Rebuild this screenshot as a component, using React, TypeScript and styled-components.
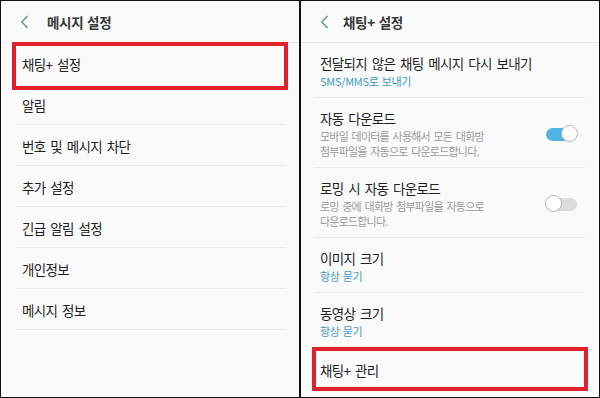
import styled, { createGlobalStyle } from "styled-components";

const GlobalStyle = createGlobalStyle`
  html, body {
    margin: 0;
    padding: 0;
    background: #fafafa;
  }
  body {
    font-family: "Noto Sans CJK KR", "Noto Sans", sans-serif;
    color: #1f1f1f;
  }
`;

interface SimpleItem {
  title: string;
  highlight?: boolean;
}

interface DetailItem {
  title: string;
  sub?: string;
  desc?: string[];
  toggle?: "on" | "off";
  highlight?: boolean;
}

const leftItems: SimpleItem[] = [
  { title: "채팅+ 설정", highlight: true },
  { title: "알림" },
  { title: "번호 및 메시지 차단" },
  { title: "추가 설정" },
  { title: "긴급 알림 설정" },
  { title: "개인정보" },
  { title: "메시지 정보" },
];

const rightItems: DetailItem[] = [
  { title: "전달되지 않은 채팅 메시지 다시 보내기", sub: "SMS/MMS로 보내기" },
  {
    title: "자동 다운로드",
    desc: ["모바일 데이터를 사용해서 모든 대화방", "첨부파일을 자동으로 다운로드합니다."],
    toggle: "on",
  },
  {
    title: "로밍 시 자동 다운로드",
    desc: ["로밍 중에 대화방 첨부파일을 자동으로", "다운로드합니다."],
    toggle: "off",
  },
  { title: "이미지 크기", sub: "항상 묻기" },
  { title: "동영상 크기", sub: "항상 묻기" },
  { title: "채팅+ 관리", highlight: true },
];

const BackIcon = () => (
  <svg width="10" height="14" viewBox="0 0 10 14">
    <path d="M7.5 1 L1.8 7 L7.5 13" fill="none" stroke="#5b8c96" strokeWidth="1.3" />
  </svg>
);

const App = () => {
  return (
    <>
      <GlobalStyle />
      <Frame>
        <Panel>
          <Header $titleOffset={27}>
            <BackIcon />
            <HeaderTitle>메시지 설정</HeaderTitle>
          </Header>
          <List>
            {leftItems.map((item) => (
              <SimpleRow key={item.title} $noLine={item.highlight}>
                <RowTitle>{item.title}</RowTitle>
                {item.highlight && <Highlight $bottom={-6} />}
              </SimpleRow>
            ))}
          </List>
        </Panel>
        <Divider />
        <Panel>
          <Header $titleOffset={23}>
            <BackIcon />
            <HeaderTitle>채팅+ 설정</HeaderTitle>
          </Header>
          <List>
            {rightItems.map((item) => (
              <DetailRow key={item.title} $noLine={item.highlight}>
                <RowText>
                  <RowTitle>{item.title}</RowTitle>
                  {item.sub && <SubText>{item.sub}</SubText>}
                  {item.desc && (
                    <Desc>
                      {item.desc.map((line) => (
                        <div key={line}>{line}</div>
                      ))}
                    </Desc>
                  )}
                </RowText>
                {item.toggle && (
                  <Toggle $on={item.toggle === "on"}>
                    <Thumb $on={item.toggle === "on"} />
                  </Toggle>
                )}
                {item.highlight && <Highlight $bottom={-1} />}
              </DetailRow>
            ))}
          </List>
        </Panel>
      </Frame>
    </>
  );
};

export default App;

const Frame = styled.div`
  width: 600px;
  height: 398px;
  box-sizing: border-box;
  border: 1px solid #111;
  display: grid;
  grid-template-columns: 1fr 2px 1fr;
  background: #fafafa;
  overflow: hidden;
`;

const Divider = styled.div`
  background: #111;
`;

const Panel = styled.div`
  display: flex;
  flex-direction: column;
  min-width: 0;
`;

const Header = styled.div<{ $titleOffset: number }>`
  height: 42px;
  box-sizing: border-box;
  display: flex;
  align-items: center;
  padding: 1px 0 0 19px;
  border-bottom: 1px solid #e8e8e8;
  > svg {
    flex: none;
    margin-right: ${(p) => p.$titleOffset - 10}px;
  }
`;

const HeaderTitle = styled.div`
  font-size: 13.5px;
  font-weight: 700;
  letter-spacing: -0.3px;
  word-spacing: 1px;
  color: #383838;
`;

const List = styled.div`
  display: flex;
  flex-direction: column;
`;

const SimpleRow = styled.div<{ $noLine?: boolean }>`
  position: relative;
  height: 41px;
  box-sizing: border-box;
  display: flex;
  align-items: center;
  padding: 2px 0 0 21px;
  &::after {
    content: "";
    position: absolute;
    left: 15px;
    right: 13px;
    bottom: 0;
    border-bottom: 1px solid ${(p) => (p.$noLine ? "transparent" : "#ececec")};
  }
`;

const DetailRow = styled.div<{ $noLine?: boolean }>`
  position: relative;
  min-height: 42px;
  box-sizing: border-box;
  display: flex;
  align-items: center;
  padding: 11px 22px 9px 19px;
  &::after {
    content: "";
    position: absolute;
    left: 13px;
    right: 14px;
    bottom: 0;
    border-bottom: 1px solid ${(p) => (p.$noLine ? "transparent" : "#ececec")};
  }
`;

const RowText = styled.div`
  flex: 1;
  display: flex;
  flex-direction: column;
`;

const RowTitle = styled.div`
  font-size: 13.5px;
  line-height: 19px;
  letter-spacing: -0.7px;
  word-spacing: 2.5px;
  color: #1f1f1f;
  white-space: nowrap;
`;

const SubText = styled.div`
  font-size: 11px;
  line-height: 16px;
  letter-spacing: -0.3px;
  word-spacing: 1px;
  color: #3f9ac2;
`;

const Desc = styled.div`
  font-size: 11px;
  line-height: 15px;
  letter-spacing: -0.8px;
  word-spacing: 2px;
  color: #9a9a9a;
  padding-top: 1px;
`;

const Toggle = styled.div<{ $on: boolean }>`
  position: relative;
  flex: none;
  width: 31px;
  height: 13px;
  border-radius: 7px;
  background: ${(p) => (p.$on ? "#4db6e2" : "#dcdcdc")};
`;

const Thumb = styled.div<{ $on: boolean }>`
  position: absolute;
  top: -3px;
  ${(p) => (p.$on ? "right: -1px;" : "left: -1px;")}
  width: 17px;
  height: 17px;
  box-sizing: border-box;
  border-radius: 50%;
  background: #fff;
  border: 1px solid #b5b5b5;
`;

const Highlight = styled.div<{ $bottom: number }>`
  position: absolute;
  left: 11px;
  right: 11px;
  top: -1px;
  bottom: ${(p) => p.$bottom}px;
  border: 4px solid #e0222c;
  pointer-events: none;
`;
